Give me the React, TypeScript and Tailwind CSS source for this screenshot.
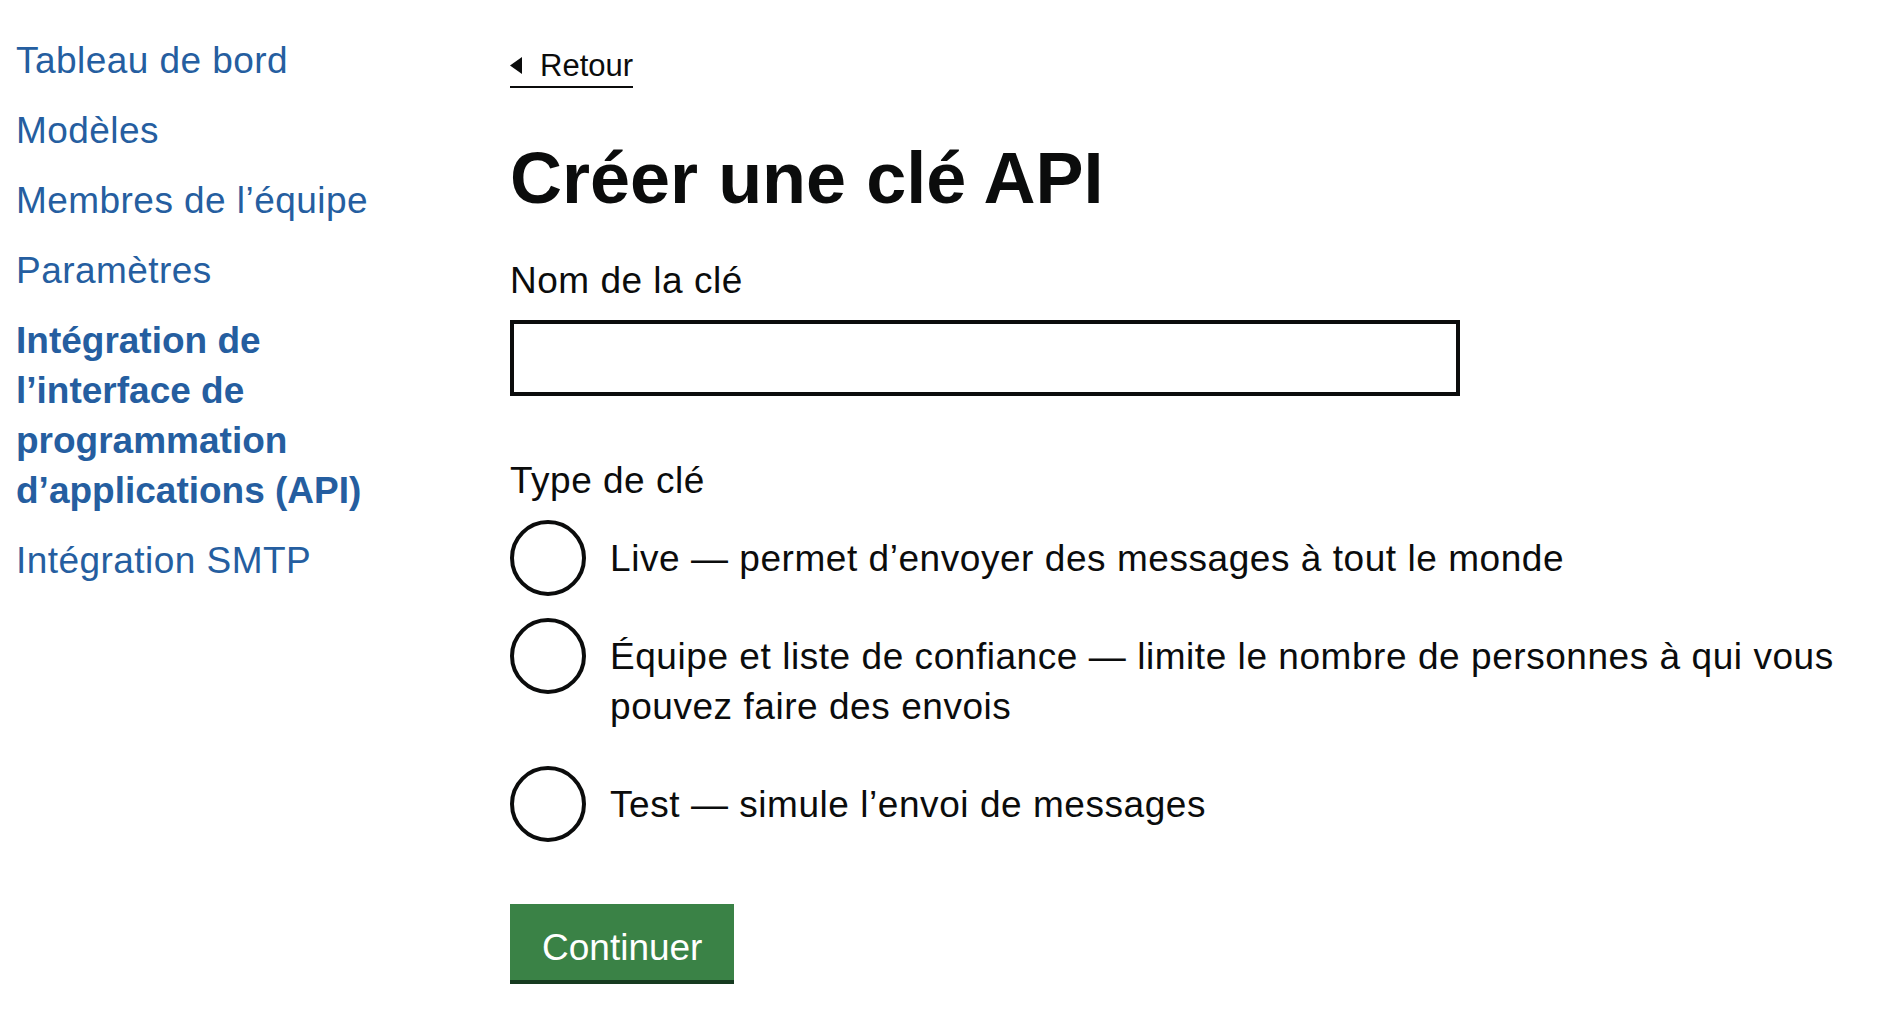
import React from "react";

const navItems = [
  { label: "Tableau de bord", active: false },
  { label: "Modèles", active: false },
  { label: "Membres de l’équipe", active: false },
  { label: "Paramètres", active: false },
  { label: "Intégration de l’interface de programmation d’applications (API)", active: true },
  { label: "Intégration SMTP", active: false },
];

const options = [
  { id: "live", text: "Live — permet d’envoyer des messages à tout le monde" },
  { id: "team", text: "Équipe et liste de confiance — limite le nombre de personnes à qui vous pouvez faire des envois" },
  { id: "test", text: "Test — simule l’envoi de messages" },
];

export default function App() {
  return (
    <div
      className="min-h-[1032px] w-full bg-white text-[#0b0c0c]"
      style={{ fontFamily: '"Liberation Sans", Arial, Helvetica, sans-serif' }}
    >
      <div className="flex pl-4 pr-4">
        <nav className="w-[494px] shrink-0 pt-[36px]">
          <ul className="flex w-[400px] flex-col gap-5">
            {navItems.map((item) => (
              <li key={item.label}>
                <a
                  href="#"
                  className={
                    "block text-[37px] leading-[50px] text-[#255ea0] " +
                    (item.active ? "font-bold" : "font-normal tracking-[0.45px]")
                  }
                >
                  {item.label}
                </a>
              </li>
            ))}
          </ul>
        </nav>

        <main className="flex-1 pt-[46px]">
          <a
            href="#"
            className="inline-flex items-center gap-[18px] border-b-2 border-[#0b0c0c] text-[31px] leading-[40px] text-[#0b0c0c]"
          >
            <svg width="12" height="17" viewBox="0 0 12 17" className="mt-[-1px]">
              <polygon points="0,8.5 12,0 12,17" fill="#0b0c0c" />
            </svg>
            <span>Retour</span>
          </a>

          <h1 className="mt-[50px] text-[72px] font-bold leading-[80px]">Créer une clé API</h1>

          <label className="mt-[38px] block text-[37px] leading-[50px] tracking-[0.5px]">Nom de la clé</label>
          <input
            type="text"
            className="mt-[14px] block h-[76px] w-[950px] border-4 border-[#0b0c0c] bg-white outline-none"
          />

          <fieldset className="mt-[60px]">
            <legend className="block text-[37px] leading-[50px] tracking-[0.5px]">Type de clé</legend>
            <div className="mt-[14px] flex flex-col gap-5">
              {options.map((o) => (
                <label key={o.id} className="flex items-start">
                  <span className="block h-[76px] w-[76px] shrink-0 rounded-full border-4 border-[#0b0c0c] bg-white" />
                  <span className="block pb-[14px] pl-[24px] pt-[14px] text-[37px] leading-[50px] tracking-[0.55px]">
                    {o.text}
                  </span>
                </label>
              ))}
            </div>
          </fieldset>

          <button
            type="button"
            className="mt-[60px] block bg-[#3a8246] px-8 pb-[7px] pt-[19px] text-[37px] leading-[50px] text-white shadow-[0_4px_0_#163a20]"
          >
            Continuer
          </button>
        </main>
      </div>
    </div>
  );
}
